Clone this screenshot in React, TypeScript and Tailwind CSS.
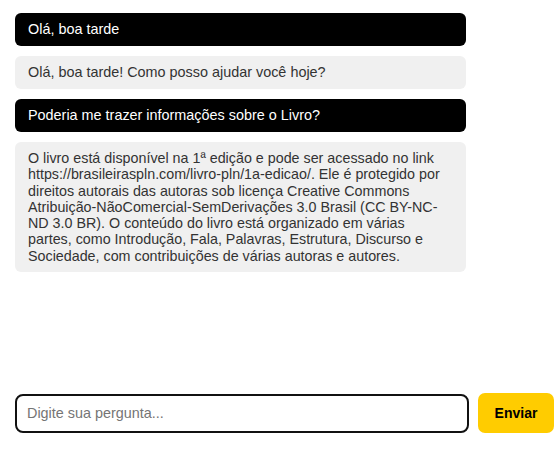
import React from "react";

const font = { fontFamily: '"Liberation Sans", Arial, sans-serif' };

export default function App() {
  return (
    <div
      className="h-[450px] w-[560px] bg-white flex flex-col pl-[15px] pr-[6px] pt-[13px] pb-[17px] overflow-hidden"
      style={font}
    >
      <div className="flex-1 flex flex-col gap-[10px] w-[451px]">
        <div className="bg-black text-white rounded-[6px] pl-[13px] pr-[16px] py-[8px] text-[14.4px] leading-[17px]">
          Olá, boa tarde
        </div>
        <div className="bg-[#f0f0f0] text-[#333333] rounded-[6px] pl-[13px] pr-[16px] py-[8px] text-[14.4px] leading-[17px]">
          Olá, boa tarde! Como posso ajudar você hoje?
        </div>
        <div className="bg-black text-white rounded-[6px] pl-[13px] pr-[16px] py-[8px] text-[14.4px] leading-[17px]">
          Poderia me trazer informações sobre o Livro?
        </div>
        <div className="bg-[#f0f0f0] text-[#333333] rounded-[6px] pl-[13px] pr-[16px] py-[8px] text-[14.3px] leading-[16.3px]">
          O livro está disponível na 1ª edição e pode ser acessado no link
          https://brasileiraspln.com/livro-pln/1a-edicao/. Ele é protegido por
          direitos autorais das autoras sob licença Creative Commons
          Atribuição-NãoComercial-SemDerivações 3.0 Brasil (CC BY-NC-ND 3.0 BR).
          O conteúdo do livro está organizado em várias partes, como Introdução,
          Fala, Palavras, Estrutura, Discurso e Sociedade, com contribuições de
          várias autoras e autores.
        </div>
      </div>
      <div className="flex items-center gap-[9px]">
        <input
          className="w-[454px] shrink-0 h-[39px] border-2 border-[#111111] rounded-[8px] px-[10px] text-[14.4px] text-[#333] placeholder:text-[#757575] outline-none"
          style={font}
          placeholder="Digite sua pergunta..."
        />
        <button
          className="w-[76px] shrink-0 h-[40px] bg-[#ffcc00] rounded-[7px] text-black font-bold text-[14px]"
          style={font}
        >
          Enviar
        </button>
      </div>
    </div>
  );
}
